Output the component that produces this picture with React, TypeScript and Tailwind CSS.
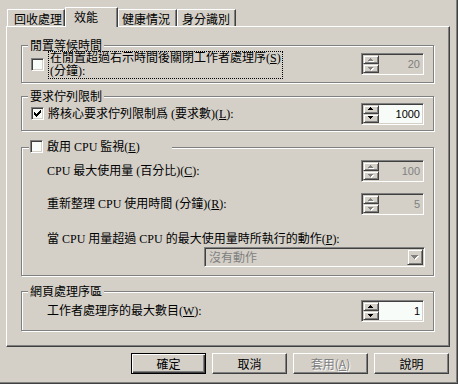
import React from "react";

const LBL = 'font-["Liberation_Serif","Noto_Sans_CJK_TC",serif] text-[12px] leading-[12px] text-black whitespace-nowrap';
const CJK = 'font-["Noto_Sans_CJK_TC",sans-serif] text-[12px] text-black whitespace-nowrap';
const SUNKEN =
  "border border-t-[#808080] border-l-[#808080] border-r-white border-b-white shadow-[inset_1px_1px_0_#404040,inset_-1px_-1px_0_#d4d0c8]";
const RAISED_IN =
  "border border-t-[#d4d0c8] border-l-[#d4d0c8] border-r-[#404040] border-b-[#404040] shadow-[inset_1px_1px_0_#fff,inset_-1px_-1px_0_#808080]";
const RAISED_BTN =
  "border border-t-white border-l-white border-r-[#404040] border-b-[#404040] shadow-[inset_-1px_-1px_0_#808080]";

function M({ c }: { c: string }) {
  return <span className="underline underline-offset-[1px] decoration-1">{c}</span>;
}

function SmallArrow({ up, disabled }: { up?: boolean; disabled?: boolean }) {
  const d = up ? "M2 0h1v1h-1z M1 1h3v1h-3z M0 2h5v1h-5z" : "M0 0h5v1h-5z M1 1h3v1h-3z M2 2h1v1h-1z";
  return (
    <svg width="6" height="4" viewBox="0 0 6 4" shapeRendering="crispEdges">
      {disabled && <path d={d} fill="#ffffff" transform="translate(1 1)" />}
      <path d={d} fill={disabled ? "#808080" : "#000000"} />
    </svg>
  );
}

function SpinBtn({ up, disabled }: { up?: boolean; disabled?: boolean }) {
  return (
    <div className={`flex-1 flex items-center justify-center bg-[#d4d0c8] ${RAISED_IN}`}>
      <SmallArrow up={up} disabled={disabled} />
    </div>
  );
}

function Spin({ value, disabled }: { value: string; disabled?: boolean }) {
  return (
    <div
      className={`flex w-[63px] h-[22px] shrink-0 p-[1px] ${SUNKEN} ${disabled ? "bg-[#d4d0c8]" : "bg-[#f8fcf8]"}`}
    >
      <div className="flex flex-col w-[16px]">
        <SpinBtn up disabled={disabled} />
        <SpinBtn disabled={disabled} />
      </div>
      <div
        className={`flex-1 text-right pr-[2px] font-["Liberation_Sans",sans-serif] text-[11px] leading-[18px] ${
          disabled ? "text-[#808080]" : "text-black"
        }`}
      >
        {value}
      </div>
    </div>
  );
}

function Check({ checked }: { checked?: boolean }) {
  return (
    <div className={`w-[13px] h-[13px] shrink-0 bg-[#f8fcf8] ${SUNKEN}`}>
      {checked && (
        <svg width="11" height="11" viewBox="0 0 11 11" shapeRendering="crispEdges">
          <path
            d="M2 4h1v3h-1z M3 5h1v3h-1z M4 6h1v3h-1z M5 5h1v3h-1z M6 4h1v3h-1z M7 3h1v3h-1z M8 2h1v3h-1z"
            fill="#000"
          />
        </svg>
      )}
    </div>
  );
}

function Group({
  title,
  className,
  children,
}: {
  title: React.ReactNode;
  className: string;
  children: React.ReactNode;
}) {
  return (
    <div
      className={`relative ml-[14px] w-[413px] shrink-0 border border-[#808080] shadow-[inset_1px_1px_0_#fff,1px_1px_0_#fff] ${className}`}
    >
      {title}
      {children}
    </div>
  );
}

function GroupTitle({ text }: { text: string }) {
  return (
    <div className={`absolute left-[6px] top-[-7px] px-[2px] bg-[#d4d0c8] ${CJK} leading-[12px]`}>{text}</div>
  );
}

function Tab({
  label,
  w,
  pl,
  selected,
}: {
  label: string;
  w: string;
  pl: string;
  selected?: boolean;
}) {
  if (selected) {
    return (
      <div
        className={`relative z-10 mb-[-1px] h-[20px] ${w} ${pl} bg-[#d4d0c8] border-t border-l border-t-white border-l-white border-r border-r-[#404040] shadow-[inset_-1px_0_0_#808080] ${CJK} leading-[18px]`}
      >
        {label}
      </div>
    );
  }
  return (
    <div
      className={`h-[17px] ${w} ${pl} pt-[1px] border-t border-l border-t-white border-l-white border-r border-r-[#404040] shadow-[inset_-1px_0_0_#808080] ${CJK} leading-[15px]`}
    >
      {label}
    </div>
  );
}

function Button({ children, def, disabled }: { children: React.ReactNode; def?: boolean; disabled?: boolean }) {
  const frame = def
    ? "border border-black shadow-[inset_1px_1px_0_#fff,inset_-1px_-1px_0_#404040,inset_-2px_-2px_0_#808080]"
    : RAISED_BTN;
  return (
    <div
      className={`w-[75px] h-[21px] flex items-center justify-center ${frame} ${CJK} leading-[12px] ${
        disabled ? "!text-[#808080] [text-shadow:1px_1px_0_#fff]" : ""
      }`}
    >
      {children}
    </div>
  );
}

export default function App() {
  return (
    <div className="w-[458px] h-[384px] bg-[#d4d0c8] flex flex-col pt-[7px] border-r border-b border-r-[#404040] border-b-[#404040] shadow-[inset_-1px_-1px_0_#808080] overflow-hidden">
      {/* Tabs */}
      <div className="flex items-end h-[19px] ml-[7px]">
        <Tab label="回收處理" w="w-[58px]" pl="pl-[6px]" />
        <Tab label="效能" w="w-[53px]" pl="pl-[8px]" selected />
        <Tab label="健康情況" w="w-[59px]" pl="pl-[3px]" />
        <Tab label="身分識別" w="w-[59px]" pl="pl-[4px]" />
      </div>

      {/* Panel */}
      <div className="ml-[6px] w-[444px] h-[321px] shrink-0 flex flex-col border-t border-l border-t-white border-l-white border-r border-b border-r-[#404040] border-b-[#404040] shadow-[inset_-1px_-1px_0_#808080]">
        {/* Group 1 */}
        <Group title={<GroupTitle text="閒置等候時間" />} className="mt-[18px] h-[38px]">
          <div className="flex items-center h-full pl-[9px] pr-[9px]">
            <Check />
            <div className="ml-[4px] mt-[2px] border border-dotted border-black pl-[1px] pr-[1px] flex flex-col">
              <div className={`h-[13px] !leading-[13px] ${LBL}`}>
                在閒置超過右示時間後關閉工作者處理序(<M c="S" />)
              </div>
              <div className={`h-[13px] !leading-[13px] ${LBL}`}>(分鐘):</div>
            </div>
            <div className="flex-1" />
            <Spin value="20" disabled />
          </div>
        </Group>

        {/* Group 2 */}
        <Group title={<GroupTitle text="要求佇列限制" />} className="mt-[13px] h-[35px]">
          <div className="flex items-center h-full pl-[9px] pr-[9px]">
            <Check checked />
            <div className={`ml-[4px] ${LBL}`}>
              將核心要求佇列限制爲 (要求數)(<M c="L" />):
            </div>
            <div className="flex-1" />
            <Spin value="1000" />
          </div>
        </Group>

        {/* Group 3 */}
        <Group
          title={
            <div className="absolute left-[7px] top-[-8px] w-[143px] pl-[1px] h-[13px] flex items-center bg-[#d4d0c8]">
              <Check />
              <div className={`ml-[4px] ${LBL}`}>
                啟用 CPU 監視(<M c="E" />)
              </div>
            </div>
          }
          className="mt-[16px] h-[129px]"
        >
          <div className="flex flex-col pl-[25px] pr-[9px] pt-[12px]">
            <div className="flex items-center justify-between h-[22px]">
              <div className={LBL}>
                CPU 最大使用量 (百分比)(<M c="C" />):
              </div>
              <Spin value="100" disabled />
            </div>
            <div className="flex items-center justify-between h-[22px] mt-[11px]">
              <div className={LBL}>
                重新整理 CPU 使用時間 (分鐘)(<M c="R" />):
              </div>
              <Spin value="5" disabled />
            </div>
            <div className={`mt-[18px] ${LBL}`}>
              當 CPU 用量超過 CPU 的最大使用量時所執行的動作(<M c="P" />):
            </div>
            <div className={`self-end mr-[-1px] mt-[2px] w-[221px] h-[20px] flex p-[1px] bg-[#d4d0c8] ${SUNKEN}`}>
              <div className={`flex-1 pl-[3px] ${CJK} !text-[#808080] leading-[16px]`}>沒有動作</div>
              <div className={`w-[16px] h-[16px] flex items-center justify-center bg-[#d4d0c8] ${RAISED_IN}`}>
                <svg width="8" height="5" viewBox="0 0 8 5" shapeRendering="crispEdges">
                  <path d="M0 0h7v1H0z M1 1h5v1H1z M2 2h3v1H2z M3 3h1v1H3z" fill="#fff" transform="translate(1 1)" />
                  <path d="M0 0h7v1H0z M1 1h5v1H1z M2 2h3v1H2z M3 3h1v1H3z" fill="#808080" />
                </svg>
              </div>
            </div>
          </div>
        </Group>

        {/* Group 4 */}
        <Group title={<GroupTitle text="網頁處理序區" />} className="mt-[15px] h-[40px]">
          <div className="flex items-center justify-between h-full pl-[25px] pr-[9px]">
            <div className={LBL}>
              工作者處理序的最大數目(<M c="W" />):
            </div>
            <Spin value="1" />
          </div>
        </Group>
      </div>

      {/* Buttons */}
      <div className="flex justify-end gap-[6px] mt-[6px] pr-[8px]">
        <Button def>確定</Button>
        <Button>取消</Button>
        <Button disabled>
          套用(<M c="A" />)
        </Button>
        <Button>說明</Button>
      </div>
    </div>
  );
}
